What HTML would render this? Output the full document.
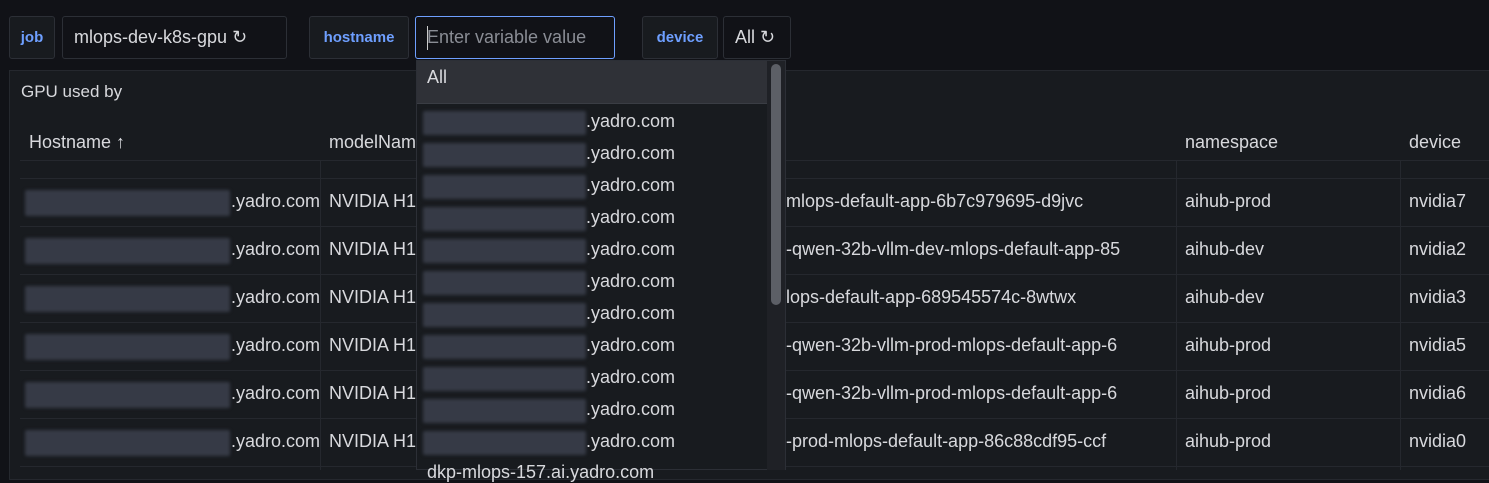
<!DOCTYPE html>
<html><head><style>
body{margin:0;width:1489px;height:470px;background:#111217;font-family:"Liberation Sans",sans-serif;color:#d8d9dd;overflow:hidden;position:relative;font-size:18px}
.a{position:absolute;white-space:nowrap}
.box{position:absolute;border:1px solid #2c2f36;border-radius:3px;background:#111217;box-sizing:border-box}
.lbl{background:#181b1f;color:#6e9fff;font-size:15px;font-weight:bold;display:flex;align-items:center;justify-content:center}
.blur{position:absolute;background:#363a46;filter:blur(1.5px);border-radius:2px}
.hl{position:absolute;height:1px;background:#25282e;left:20px;width:1469px}
.vl{position:absolute;width:1px;background:#25282e}
</style></head><body>
<div class="box lbl" style="left:9px;top:16px;width:46px;height:43px">job</div>
<div class="box" style="left:62px;top:16px;width:225px;height:43px"><span class="a" style="left:11px;top:10px;font-size:18px">mlops-dev-k8s-gpu ↻</span></div>
<div class="box lbl" style="left:309px;top:16px;width:100px;height:43px">hostname</div>
<div class="box" style="left:415px;top:16px;width:200px;height:43px;border-color:#6e9fff"><span class="a" style="left:11px;top:10px;font-size:18px;color:#8a8d95">Enter variable value</span><span class="a" style="left:11px;top:9px;width:1px;height:24px;background:#ccc"></span></div>
<div class="box lbl" style="left:642px;top:16px;width:76px;height:43px">device</div>
<div class="box" style="left:723px;top:16px;width:68px;height:43px"><span class="a" style="left:11px;top:10px;font-size:18px">All ↻</span></div>

<div style="position:absolute;left:9px;top:70px;width:1490px;height:410px;background:#181b1f;border:1px solid #25282e;box-sizing:border-box"></div>
<div class="a" style="left:21px;top:82px;font-size:17px">GPU used by</div>
<div class="a" style="left:29px;top:132px">Hostname ↑</div>
<div class="a" style="left:329px;top:132px">modelName</div>
<div class="a" style="left:1185px;top:132px">namespace</div>
<div class="a" style="left:1409px;top:132px">device</div>
<div class="hl" style="top:160px"></div>
<div class="hl" style="top:178px"></div><div class="hl" style="top:226px"></div><div class="hl" style="top:274px"></div><div class="hl" style="top:322px"></div><div class="hl" style="top:370px"></div><div class="hl" style="top:418px"></div><div class="hl" style="top:466px"></div>
<div class="vl" style="left:320px;top:160px;height:310px"></div>
<div class="vl" style="left:1176px;top:160px;height:310px"></div>
<div class="vl" style="left:1400px;top:160px;height:310px"></div>

<div id="rows"></div>
<script>
var d=[["mlops-default-app-6b7c979695-d9jvc","aihub-prod","nvidia7"],["-qwen-32b-vllm-dev-mlops-default-app-85","aihub-dev","nvidia2"],["lops-default-app-689545574c-8wtwx","aihub-dev","nvidia3"],["-qwen-32b-vllm-prod-mlops-default-app-6","aihub-prod","nvidia5"],["-qwen-32b-vllm-prod-mlops-default-app-6","aihub-prod","nvidia6"],["-prod-mlops-default-app-86c88cdf95-ccf","aihub-prod","nvidia0"]];
var h="";
d.forEach(function(r,i){var y=191+i*48;
h+='<div class="blur" style="left:25px;top:'+(y-1)+'px;width:205px;height:26px"></div>';
h+='<div class="a" style="left:231px;top:'+y+'px;width:89px;overflow:hidden">.yadro.com</div>';
h+='<div class="a" style="left:329px;top:'+y+'px">NVIDIA H100</div>';
h+='<div class="a" style="left:786px;top:'+y+'px;width:390px;overflow:hidden">'+r[0]+'</div>';
h+='<div class="a" style="left:1185px;top:'+y+'px">'+r[1]+'</div>';
h+='<div class="a" style="left:1409px;top:'+y+'px">'+r[2]+'</div>';});
h+='<div style="position:absolute;left:416px;top:60px;width:370px;height:410px;background:#181b1f;border:1px solid #2c2f36;box-sizing:border-box"></div>';
h+='<div style="position:absolute;left:417px;top:61px;width:350px;height:42px;background:#2f3137"></div>';
h+='<div class="a" style="left:427px;top:67px">All</div>';
h+='<div style="position:absolute;left:417px;top:103px;width:350px;height:1px;background:#3a3d44"></div>';
h+='<div style="position:absolute;left:767px;top:61px;width:18px;height:409px;background:#1f2126"></div>';
h+='<div style="position:absolute;left:771px;top:64px;width:10px;height:241px;background:#5c5f66;border-radius:5px"></div>';
for(var i=0;i<11;i++){var y=111+i*32;
h+='<div class="blur" style="left:423px;top:'+y+'px;width:163px;height:24px"></div>';
h+='<div class="a" style="left:586px;top:'+y+'px">.yadro.com</div>';}
h+='<div class="a" style="left:427px;top:462px">dkp-mlops-157.ai.yadro.com</div>';
document.getElementById("rows").innerHTML=h;
</script>
</body></html>
